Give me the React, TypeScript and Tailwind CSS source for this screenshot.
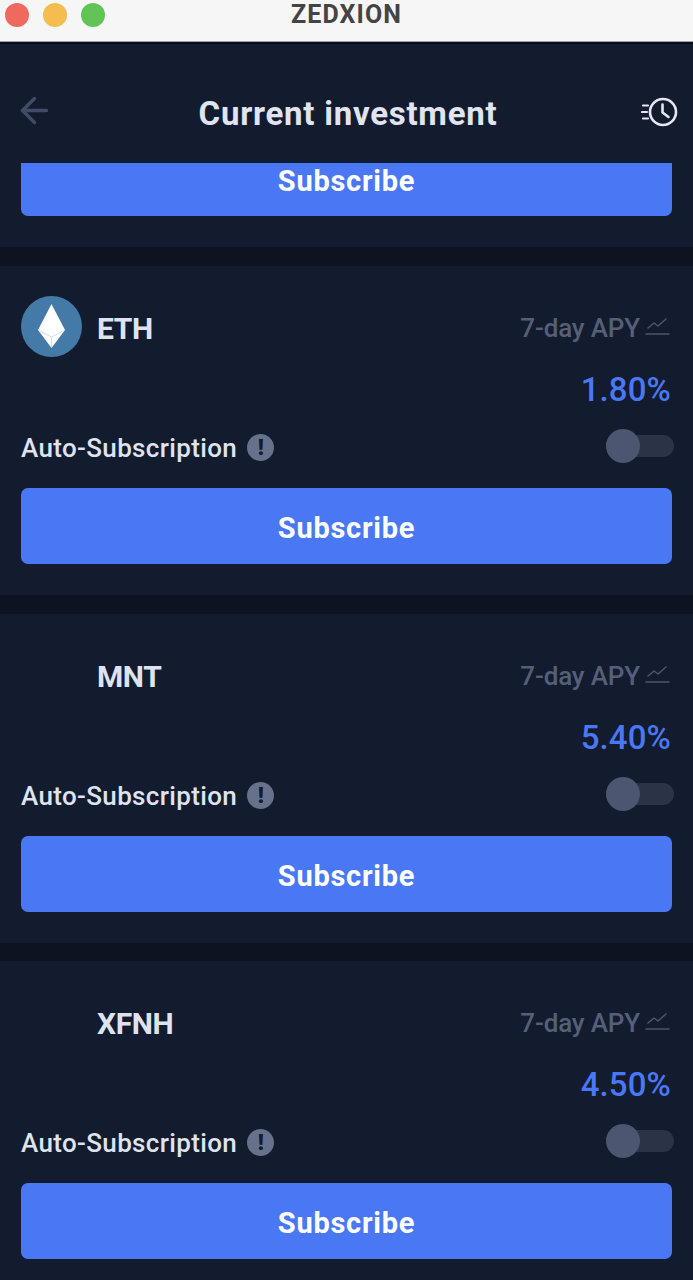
import React from "react";
import { ArrowLeft } from "lucide-react";

const font = "font-['Roboto',sans-serif]";

const HistoryIcon = () => (
  <svg width="40" height="32" viewBox="0 0 40 32" fill="none" stroke="#e4e8f4" strokeLinecap="round">
    <circle cx="22" cy="16" r="13" strokeWidth="2.6" />
    <path d="M21.5 8.5V16.5L27.5 21" strokeWidth="2.6" strokeLinejoin="round" />
    <path d="M2 9.5H7M1 16H6M2 22.5H7" strokeWidth="2.2" />
  </svg>
);

const TrendIcon = () => (
  <svg width="25" height="20" viewBox="0 0 25 20" fill="none" stroke="#4d566e" strokeWidth="1.5" strokeLinecap="round" strokeLinejoin="round">
    <path d="M3 11L9 6L13 9L21 2" />
    <path d="M1 17H24" />
  </svg>
);

const EthLogo = () => (
  <svg width="61" height="61" viewBox="0 0 61 61">
    <circle cx="30.5" cy="30.5" r="30.5" fill="#447aa8" />
    <path d="M30.5 8L17 34L30.5 52L44 34Z" fill="#ffffff" />
    <path d="M17 34L30.5 41L44 34M30.5 41V52" fill="none" stroke="#c4d6e4" strokeWidth="0.8" />
  </svg>
);

const InvestCard = ({ symbol, apy, logo }: { symbol: string; apy: string; logo?: React.ReactNode }) => (
  <div className="px-[21px] pt-[30px] pb-[31px] bg-[#131b2e]">
    <div className="flex items-center justify-between h-[61px]">
      <div className="flex items-center">
        <div className="w-[61px] h-[61px]">{logo}</div>
        <span className="ml-[15px] mt-[3px] text-[30px] font-bold text-[#dfe3f0] tracking-[-0.4px]">{symbol}</span>
      </div>
      <div className="flex items-center gap-[5px] mr-[2px]">
        <span className="mt-[4px] text-[26px] font-medium text-[#565f77] tracking-[-0.15px]">7-day APY</span>
        <TrendIcon />
      </div>
    </div>
    <div className="flex justify-end mt-[10px] h-[46px] items-center pr-[1px]">
      <span className="text-[33px] font-medium text-[#4a78f4] tracking-[0.1px]">{apy}</span>
    </div>
    <div className="flex items-center justify-between h-[44px] mt-[13px]">
      <div className="flex items-center gap-[10px]">
        <span className="text-[26px] font-medium text-[#dfe3f0] tracking-[0.35px]">Auto-Subscription</span>
        <span className="w-[27px] h-[27px] -mt-[2px] rounded-full bg-[#67718c] text-[#131b2e] text-[22px] font-black flex items-center justify-center">!</span>
      </div>
      <div className="relative w-[68px] h-[22px] -mr-[2px] -mt-[4px] rounded-full bg-[#2b3347]">
        <span className="absolute left-0 -top-[6px] w-[34px] h-[34px] rounded-full bg-[#4c5670]" />
      </div>
    </div>
    <button className="mt-[18px] w-full h-[76px] rounded-[7px] bg-[#4a78f4] text-white text-[29px] font-bold tracking-[0.75px] pt-[6px]">
      Subscribe
    </button>
  </div>
);

export default function App() {
  return (
    <div className={`w-[693px] h-[1280px] overflow-hidden bg-[#131b2e] ${font}`}>
      <div className="relative h-[42px] bg-[#f6f6f6] border-b border-[#9aa3ad] flex items-center justify-center">
        <div className="absolute left-[5px] top-[3px] flex gap-[14px]">
          <span className="w-[24px] h-[24px] rounded-full bg-[#ee6a5f]" />
          <span className="w-[24px] h-[24px] rounded-full bg-[#f5bd4f]" />
          <span className="w-[24px] h-[24px] rounded-full bg-[#61c454]" />
        </div>
        <span className="text-[25px] font-bold text-[#444444] tracking-[1.1px] -mt-[12px]">ZEDXION</span>
      </div>
      <div className="h-[2px] bg-[#090d17]" />
      <div className="h-[119px] flex items-center justify-between pl-[14px] pr-[12px] pt-[20px]">
        <ArrowLeft size={41} strokeWidth={2} className="text-[#414b66] -mt-[6px]" />
        <h1 className="text-[33px] font-bold text-[#e0e4f1] tracking-[0.75px]">Current investment</h1>
        <div className="-mt-[4px]">
          <HistoryIcon />
        </div>
      </div>
      <div className="px-[21px] pb-[31px]">
        <button className="w-full h-[53px] rounded-b-[7px] bg-[#4a78f4] text-white text-[29px] leading-[29px] font-bold tracking-[0.75px] pb-[17px]">
          Subscribe
        </button>
      </div>
      <div className="h-[19px] bg-[#0d1321]" />
      <InvestCard symbol="ETH" apy="1.80%" logo={<EthLogo />} />
      <div className="h-[19px] bg-[#0d1321]" />
      <InvestCard symbol="MNT" apy="5.40%" />
      <div className="h-[18px] bg-[#0d1321]" />
      <InvestCard symbol="XFNH" apy="4.50%" />
    </div>
  );
}
